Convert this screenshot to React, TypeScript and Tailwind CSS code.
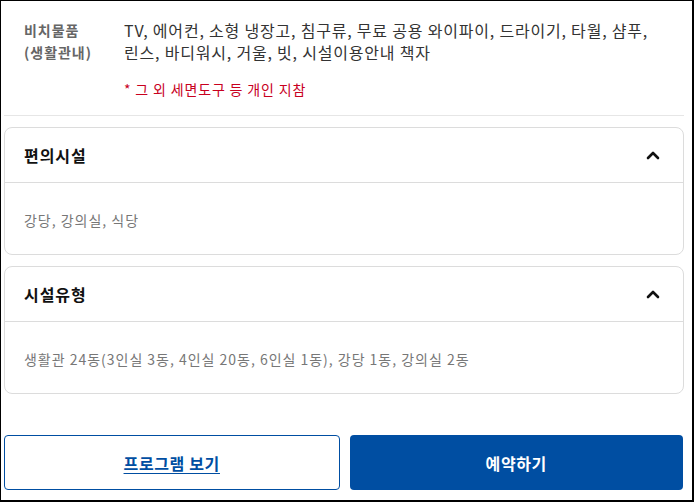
import React from "react";

function Chevron() {
  return (
    <svg width="14" height="10" viewBox="0 0 14 10" className="block">
      <polyline points="2,8 7,3 12,8" fill="none" stroke="#111" strokeWidth="2.6" strokeLinecap="round" strokeLinejoin="round" />
    </svg>
  );
}

function Card({ title, body }: { title: string; body: string }) {
  return (
    <div className="rounded-[8px] border border-[#dcdcdc] bg-white">
      <div className="flex h-[55px] items-center justify-between border-b border-[#dcdcdc] pl-[19px] pr-[23px]">
        <span className="text-[16px] font-bold tracking-[0.06em] text-[#111]">{title}</span>
        <Chevron />
      </div>
      <div className="flex h-[71px] items-center pl-[19px] pt-[3px] text-[14px] tracking-[0.07em] text-[#777]">{body}</div>
    </div>
  );
}

export default function App() {
  return (
    <div className="box-border h-[502px] w-[694px] overflow-hidden border-b-2 border-l border-r-2 border-t border-black bg-white font-['Noto_Sans_CJK_KR','Noto_Sans',sans-serif]">
      <div className="pl-[3px] pr-[8px]">
        <div className="flex pl-[20px] pt-[18px]">
          <div className="w-[100px] shrink-0 text-[14px] font-semibold leading-[22px] tracking-[0.07em] text-[#666]">
            비치물품
            <br />
            (생활관내)
          </div>
          <div className="flex-1">
            <div className="text-[16px] leading-[22px] tracking-[0.05em] text-[#333]">
              TV, 에어컨, 소형 냉장고, 침구류, 무료 공용 와이파이, 드라이기, 타월, 샴푸,
              <br />
              린스, 바디워시, 거울, 빗, 시설이용안내 책자
            </div>
            <div className="mt-[15px] text-[14px] leading-[22px] tracking-[0.06em] text-[#c8001e]">* 그 외 세면도구 등 개인 지참</div>
          </div>
        </div>
        <div className="mt-[15px] h-px w-[680px] bg-[#e6e6e6]" />
        <div className="mt-[11px] flex flex-col gap-[11px]">
          <Card title="편의시설" body="강당, 강의실, 식당" />
          <Card title="시설유형" body="생활관 24동(3인실 3동, 4인실 20동, 6인실 1동), 강당 1동, 강의실 2동" />
        </div>
        <div className="mt-[41px] flex gap-[10px] pr-[1px]">
          <button className="flex h-[55px] flex-1 items-center justify-center rounded-[4px] border border-[#004ea2] bg-white text-[16px] font-bold tracking-[0.04em] text-[#004ea2] underline underline-offset-[3px]">
            프로그램 보기
          </button>
          <button className="flex h-[55px] flex-1 items-center justify-center rounded-[4px] bg-[#004ea2] text-[16px] font-bold tracking-[0.04em] text-white">
            예약하기
          </button>
        </div>
      </div>
    </div>
  );
}
